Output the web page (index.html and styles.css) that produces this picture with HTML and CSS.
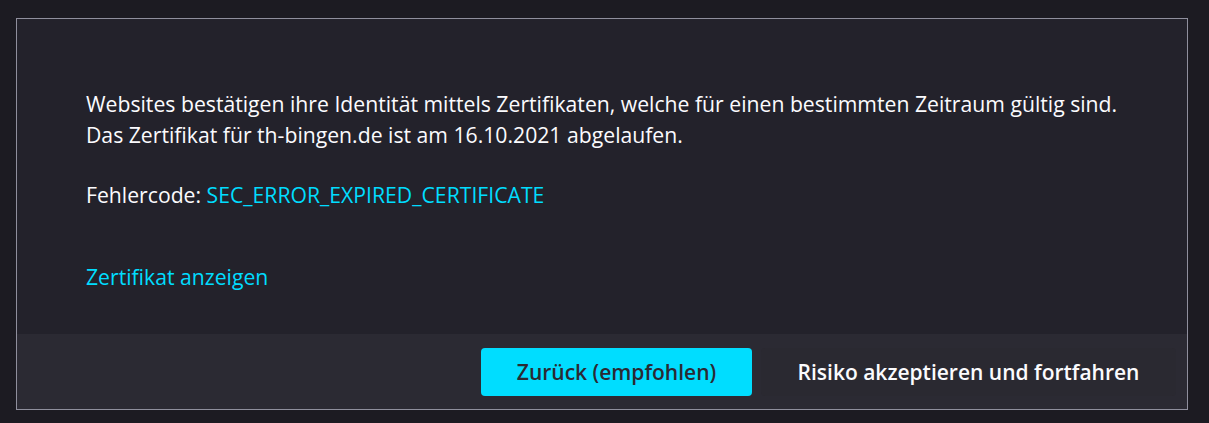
FILE: index.html
```html
<!DOCTYPE html>
<html lang="de">
<head>
<meta charset="utf-8">
<title>Warnung: Mögliches Sicherheitsrisiko erkannt</title>
<link rel="stylesheet" href="styles.css">
</head>
<body>
<div class="panel">
  <div class="content">
    <p class="desc">Websites bestätigen ihre Identität mittels Zertifikaten, welche für einen bestimmten Zeitraum gültig sind.<br>Das Zertifikat für th-bingen.de ist am 16.10.2021 abgelaufen.</p>
    <p class="code">Fehlercode: <a href="#" class="link">SEC_ERROR_EXPIRED_CERTIFICATE</a></p>
    <p class="view"><a href="#" class="link">Zertifikat anzeigen</a></p>
  </div>
  <div class="footer">
    <button class="btn primary">Zurück (empfohlen)</button>
    <button class="btn secondary">Risiko akzeptieren und fortfahren</button>
  </div>
</div>
</body>
</html>
```
FILE: styles.css
```css
html, body {
  margin: 0;
  height: 100%;
}
body {
  background: #1c1b22;
  font-family: "Open Sans", "Noto Sans", sans-serif;
  color: #fbfbfe;
  padding: 18px 21px 13px 16px;
  box-sizing: border-box;
}
.panel {
  border: 1px solid #8f8f9d;
  background: #23222b;
  height: 392px;
  box-sizing: border-box;
  display: flex;
  flex-direction: column;
}
.content {
  flex: 1;
  padding: 69px 20px 0 69px;
  font-size: 21.2px;
  line-height: 31px;
}
.content p {
  margin: 0;
}
.code {
  margin-top: 29px !important;
}
.view {
  margin-top: 51px !important;
}
.link {
  color: #00ddff;
  text-decoration: none;
}
.footer {
  background: #2b2a33;
  height: 75px;
  display: flex;
  justify-content: flex-end;
  align-items: flex-start;
  gap: 9px;
  padding: 14px 11px 0 0;
  box-sizing: border-box;
}
.btn {
  font-family: inherit;
  font-size: 21px;
  height: 48px;
  border: none;
  border-radius: 4px;
  font-weight: 600;
  cursor: pointer;
  padding: 0;
}
.primary {
  background: #00ddff;
  color: #2b2a33;
  width: 271px;
}
.secondary {
  background: #2a2931;
  color: #fbfbfe;
  width: 415px;
}
```
